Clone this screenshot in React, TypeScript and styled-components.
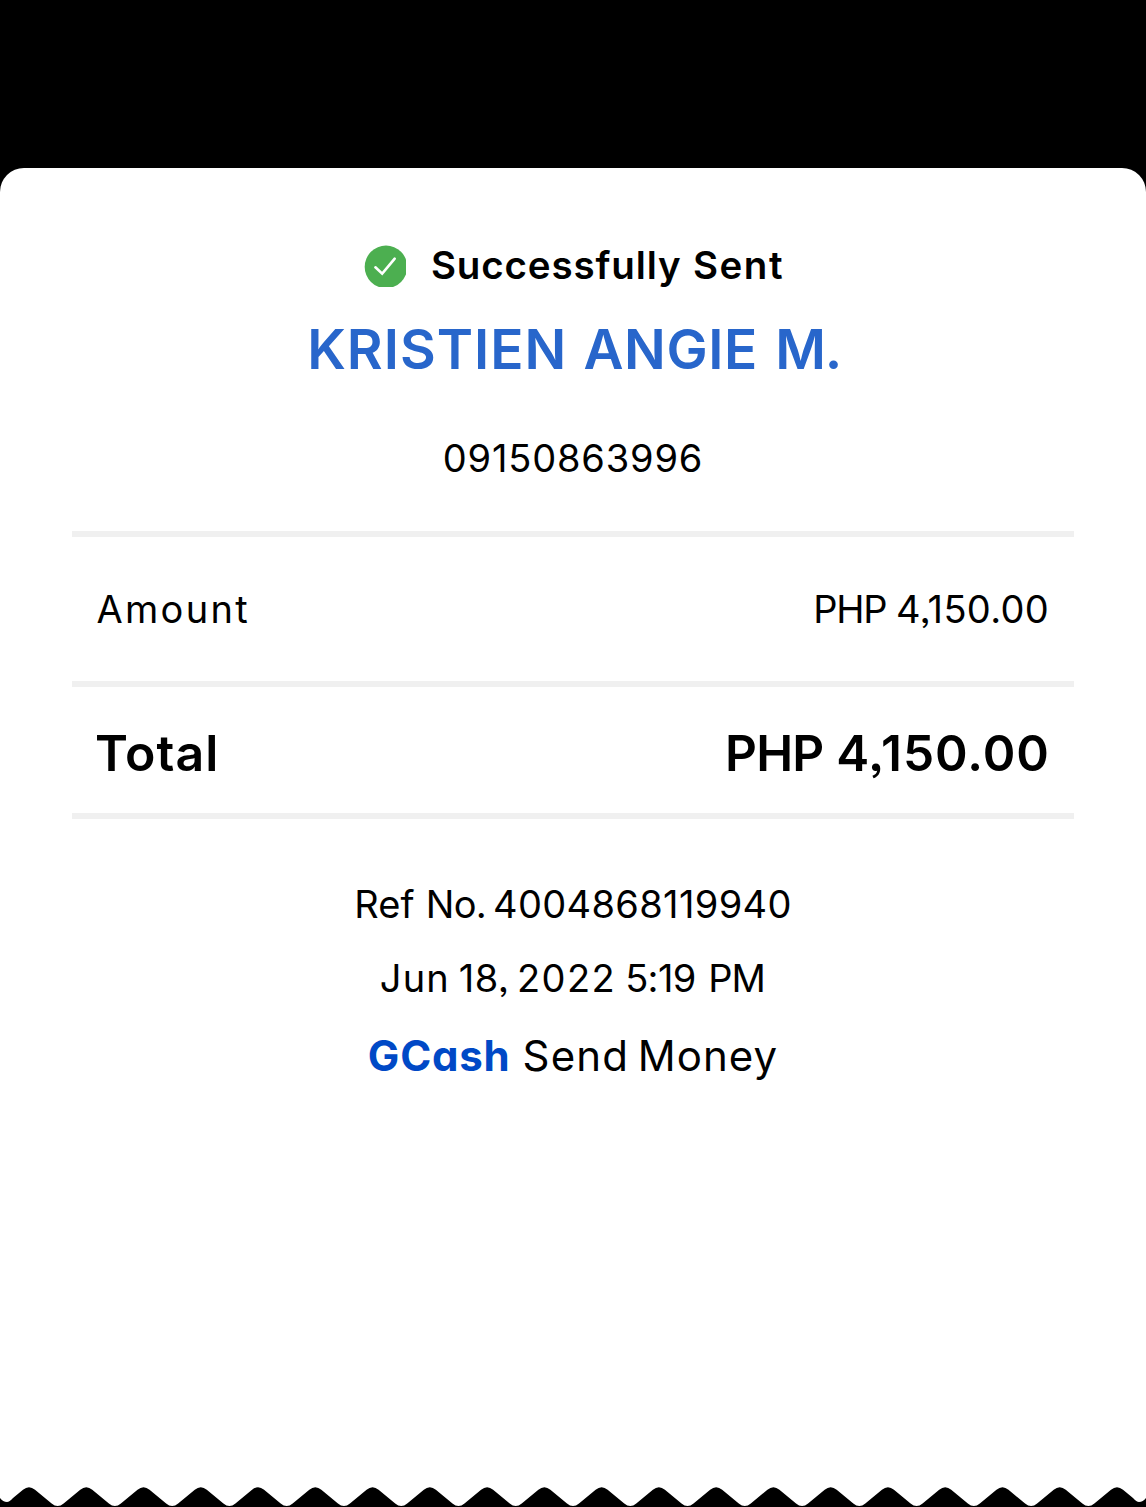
import React from "react";
import styled, { createGlobalStyle } from "styled-components";

const GlobalStyle = createGlobalStyle`
  * { box-sizing: border-box; }
  body {
    margin: 0;
    background: #000;
    color: #000;
    font-family: Inter, "Liberation Sans", sans-serif;
    font-feature-settings: "ss03";
  }
`;

const Screen = styled.main`
  height: 1507px;
  padding-top: 168px;
  background: #000;
  overflow: hidden;
`;

const Sheet = styled.section`
  display: flex;
  flex-direction: column;
  height: 1339px;
  padding: 73px 72px 0;
  background: #fff;
  border-radius: 24px 24px 0 0;
`;

const Header = styled.header`
  height: 290px;
`;

const Line = styled.div<{ $top?: number; $nudge?: number; $height?: number }>`
  display: flex;
  justify-content: center;
  align-items: center;
  height: ${(p) => p.$height ?? 48}px;
  margin-top: ${(p) => p.$top ?? 0}px;
  margin-left: ${(p) => p.$nudge ?? 0}px;
`;

const Text = styled.span<{ $size?: number; $weight?: number; $color?: string }>`
  display: flex;
  font-size: ${(p) => p.$size ?? 38}px;
  font-weight: ${(p) => p.$weight ?? 400};
  color: ${(p) => p.$color ?? "#000"};
  line-height: 48px;
  white-space: pre;
`;

const Word = styled.span<{ $track?: number; $gap?: number }>`
  letter-spacing: ${(p) => p.$track ?? 0}px;
  margin-left: ${(p) => p.$gap ?? 0}px;
`;

const Brand = styled(Text)`
  font-feature-settings: "cv11";
`;

const CheckIcon = styled.svg`
  display: block;
  width: 42px;
  height: 42px;
  margin: 2px 25px 0 0;
`;

const Row = styled.div<{ $height: number; $inset: string }>`
  display: flex;
  justify-content: space-between;
  align-items: center;
  height: ${(p) => p.$height}px;
  padding: ${(p) => p.$inset};
`;

const Divider = styled.hr`
  flex: none;
  width: 100%;
  height: 6px;
  margin: 0;
  border: 0;
  background: #f0f0f0;
`;

const Footer = styled.footer`
  padding-top: 61px;
`;

const TornEdge = styled.svg`
  display: block;
  flex: none;
  width: 1146px;
  height: 22px;
  margin: auto -72px 0;
`;

const FIRST = 29;
const COUNT = 20;
const STEP = (1117 - FIRST) / (COUNT - 1);

function tornPath() {
  let d = "M0 22V13Q3 17 7 17Q9.5 17 13 13.1";
  for (let i = 0; i < COUNT; i++) {
    const x = FIRST + i * STEP;
    d += `L${x - 6} 4.8Q${x} -0.2 ${x + 6} 4.8`;
    if (i < COUNT - 1) {
      const v = x + STEP / 2;
      d += `L${v - 6} 18.5Q${v} 23.5 ${v + 6} 18.5`;
    }
  }
  return d + "L1133 13.1Q1136.5 17 1139 17Q1143 17 1146 13V22Z";
}

export default function App() {
  return (
    <Screen>
      <GlobalStyle />
      <Sheet>
        <Header>
          <Line $nudge={2}>
            <CheckIcon viewBox="0 0 42 42">
              <circle cx="22" cy="21.9" r="21.3" fill="#4caf50" />
              <path
                d="M11.4 22.3L18.2 28.7L30.7 13.7"
                fill="none"
                stroke="#fff"
                strokeWidth="2.6"
                strokeLinecap="round"
              />
            </CheckIcon>
            <Text $size={38.5} $weight={600}>
              <Word $track={0.86}>Successfully</Word>
              <Word $track={1.55} $gap={11.5}>Sent</Word>
            </Text>
          </Line>
          <Line $top={28} $height={64} $nudge={2.2}>
            <Text $size={55} $weight={600} $color="#2866cb">
              <Word $track={1}>KRISTIEN</Word>
              <Word $track={0.6} $gap={16.1}>ANGIE</Word>
              <Word $track={-1.2} $gap={17.2}>M.</Word>
            </Text>
          </Line>
          <Line $top={53}>
            <Text>
              <Word $track={0.83}>09150863996</Word>
            </Text>
          </Line>
        </Header>
        <Divider />
        <Row $height={144} $inset="0 24.8px 0 24.5px">
          <Text>
            <Word $track={2.3}>Amount</Word>
          </Text>
          <Text>
            <Word $track={-1.25}>PHP</Word>
            <Word $track={0.35} $gap={9.6}>4,150.00</Word>
          </Text>
        </Row>
        <Divider />
        <Row $height={126} $inset="5px 24px 0 23px">
          <Text $size={50} $weight={600}>
            <Word $track={1}>Total</Word>
          </Text>
          <Text $size={49.5} $weight={600}>
            <Word $track={-0.7}>PHP</Word>
            <Word $track={1} $gap={12.7}>4,150.00</Word>
          </Text>
        </Row>
        <Divider />
        <Footer>
          <Line>
            <Text>
              <Word $track={0.1}>Ref</Word>
              <Word $track={-0.78} $gap={11.2}>No.</Word>
              <Word $track={0.35} $gap={7.2}>4004868119940</Word>
            </Text>
          </Line>
          <Line $top={26} $nudge={-1.4}>
            <Text>
              <Word $track={1.2}>Jun</Word>
              <Word $track={0.35} $gap={8.9}>18,</Word>
              <Word $track={1.4} $gap={8}>2022</Word>
              <Word $track={-0.67} $gap={9.1}>5:19</Word>
              <Word $track={-1} $gap={12.7}>PM</Word>
            </Text>
          </Line>
          <Line $top={30}>
            <Brand $size={42} $weight={700} $color="#0049c6">
              <Word $track={0.8}>GCash</Word>
            </Brand>
            <Brand $size={42}>
              <Word $track={1.17} $gap={12}>Send</Word>
              <Word $track={1.05} $gap={8.5}>Money</Word>
            </Brand>
          </Line>
        </Footer>
        <TornEdge viewBox="0 0 1146 22">
          <path d={tornPath()} fill="#000" />
        </TornEdge>
      </Sheet>
    </Screen>
  );
}
